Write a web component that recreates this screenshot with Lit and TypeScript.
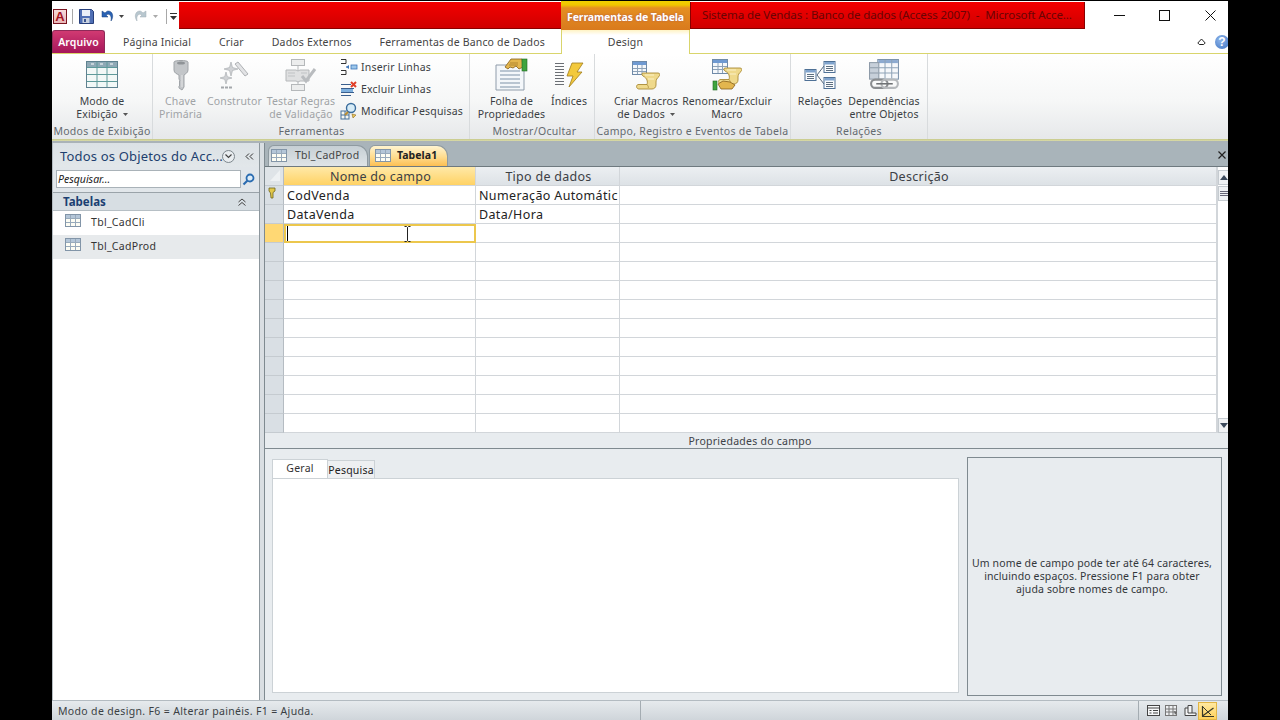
import { LitElement, html, svg, css } from "lit";
import { customElement } from "lit/decorators.js";

const tableIco = (w = 16, h = 13) => html`<svg width=${w} height=${h} viewBox="0 0 16 13"><rect x=".5" y=".5" width="15" height="12" fill="#fdfdf4" stroke="#8295a8"/><rect x="1" y="1" width="14" height="3" fill="#b4c6d8"/><path d="M1 4.500h14M1 8.500h14M5.500 1v11M10.500 1v11" stroke="#98aabb" fill="none"/></svg>`;

const bigTable = html`<svg width="32" height="27" viewBox="0 0 32 27"><rect x=".5" y=".5" width="31" height="26" fill="#f2f8f7" stroke="#5f8290"/><rect x="1" y="1" width="30" height="5" fill="#8fa9b6"/><path d="M5 3h3M14 3h3M24 3h3" stroke="#fff"/><path d="M1 6.500h30M1 13.500h30M1 20.500h30M11 1v25M21 1v25" stroke="#5e9a9a" fill="none"/></svg>`;

const keyIco = html`<svg width="18" height="32" viewBox="0 0 18 32"><path d="M2 3c0-2 14-2 14 0v8c0 3-3 4-4 5v12l-2 3-3-2v-2l1-1-1-1 1-1-1-1 1-1-1-2v-4c-2-1-5-2-5-5z" fill="#c3c6c9" stroke="#a0a4a8"/><ellipse cx="9" cy="4" rx="4" ry="1.600" fill="#8f9397"/><path d="M10 16v12" stroke="#e4e5e6"/></svg>`;

const wandIco = html`<svg width="29" height="28" viewBox="0 0 29 28"><path d="M15 3l3-2 10 12-3 2z" fill="#e2e3e5" stroke="#aeb1b4"/><path d="M11 1l1.500 5.500L18 8l-5.500 1.500L11 15 9.500 9.500 4 8l5.500-1.500z" fill="#d0d2d5" stroke="#a3a7ab" stroke-width=".6"/><path d="M6 11l1.300 4.700L12 17l-4.700 1.300L6 23l-1.300-4.700L0 17l4.700-1.300z" fill="#d0d2d5" stroke="#a3a7ab" stroke-width=".6"/><path d="M1 26.500h3M5 26.500h3M9 26.500h3" stroke="#a3a7ab" stroke-width="2"/></svg>`;

const testIco = html`<svg width="32" height="32" viewBox="0 0 32 32"><rect x="6.500" y=".5" width="13" height="6" fill="#eceded" stroke="#b5b8ba"/><rect x="6.500" y="25.500" width="13" height="6" fill="#eceded" stroke="#b5b8ba"/><path d="M13 7v18" stroke="#b5b8ba"/><path d="M1 11h10l2 1 2-1h9v11h-9l-2 1-2-1H1z" fill="#dfe0e1" stroke="#b5b8ba"/><path d="M3 14h7M3 17h7M16 14h6" stroke="#c0c3c5"/><path d="M17 17l4 5 9-12" fill="none" stroke="#b9bcbf" stroke-width="3"/></svg>`;

const insIco = html`<svg width="18" height="18" viewBox="0 0 18 18"><path d="M1 1.500h5v4H1M1 12.500h5v4H1" fill="none" stroke="#333"/><path d="M6 9h4" stroke="#4a7fc0" stroke-dasharray="1 1"/><path d="M9 7l-3 2 3 2z" fill="#3d75b8"/><rect x="11" y="7" width="6" height="4" fill="#9cc6ea" stroke="#3d75b8" stroke-width=".8"/></svg>`;

const delIco = html`<svg width="18" height="18" viewBox="0 0 18 18"><path d="M1 4.500h10M1 8.500h13M1 12.500h13M1 15.500h10" stroke="#3a5f8e"/><path d="M1 9h12v3H1z" fill="#7fb0de"/><path d="M11 2l5 5M16 2l-5 5" stroke="#e0402a" stroke-width="2"/></svg>`;

const lookIco = html`<svg width="18" height="18" viewBox="0 0 18 18"><rect x="1" y="9" width="8" height="8" fill="#f7f7f0" stroke="#44709c"/><path d="M1 13h8M5 9v8" stroke="#44709c"/><circle cx="11" cy="6" r="4.500" fill="#d7ecf7" stroke="#3a6c9c" stroke-width="1.400"/><path d="M8 10l-3 3" stroke="#b98c30" stroke-width="2"/><path d="M12 12l4 1-3 3z" fill="#e9c65a" stroke="#8f6d22" stroke-width=".6"/></svg>`;

const sheetIco = html`<svg width="34" height="33" viewBox="0 0 34 33"><path d="M1 7h28v25H1z" fill="#f4f7fa" stroke="#8f9caa"/><path d="M5 13h20M5 17h20M5 21h20M5 25h20M5 29h20" stroke="#7f93a8"/><path d="M10 9l6-8h11l1 8-4 2-3-3-3 2-3-1-2 2z" fill="#e3b64e" stroke="#86601c" stroke-width=".8"/><path d="M15 5l8 0M14 7l9 0" stroke="#9b7426" stroke-width=".7"/><rect x="27" y="1" width="5" height="12" fill="#3fa43f" stroke="#1f6a1f" stroke-width=".6"/></svg>`;

const indexIco = html`<svg width="30" height="26" viewBox="0 0 30 26"><path d="M1 1.500h9M1 4.500h9M1 7.500h9M1 10.500h9M1 13.500h9M1 16.500h9M1 19.500h9M1 22.500h9" stroke="#6b6f74" stroke-width="1.200"/><path d="M18 1h11l-6 9h5L15 25l4-11h-6z" fill="#f3c93c" stroke="#a07c1c" stroke-width=".8"/></svg>`;

const scroll = svg`<path d="M11 12h15c2 0 2.500 2 1 3.500-2 1.500-3 3.500-3 5.500v3c0 2.500-2 4-4 4H7c-2.500 0-3.500-3.500-1-4.500h9c1-3 0-6.500-4-8.500-1.500-1-1.500-3 0-3z" fill="#efd98b" stroke="#a98a36" stroke-width=".9"/><path d="M13 14h9M16 18h6" stroke="#fbf1c8"/><path d="M15 23.500c1 1.500 2 2.500 1 3.500" stroke="#a98a36" stroke-width=".8" fill="none"/>`;

const macroIco = html`<svg width="28" height="30" viewBox="0 0 28 30"><rect x=".5" y="1.500" width="14" height="13" fill="#f5f8fb" stroke="#6f8aa8"/><rect x="1" y="2" width="13" height="3" fill="#6f9ad2"/><path d="M1 8.500h13M1 11.500h13M5.500 5v9M10 5v9" stroke="#8da2b8"/><g transform="translate(0 1)">${scroll}</g></svg>`;

const renameIco = html`<svg width="30" height="32" viewBox="0 0 30 32"><rect x=".5" y=".5" width="15" height="14" fill="#f5f8fb" stroke="#6f8aa8"/><rect x="1" y="1" width="14" height="3" fill="#6f9ad2"/><path d="M1 7.500h14M1 10.500h14M6 4v10M10.500 4v10" stroke="#8da2b8"/><g transform="translate(2 -3)">${scroll}</g><path d="M6 25l5-3 7 1 5 3-3 4H9z" fill="#e3b64e" stroke="#86601c" stroke-width=".8"/><rect x="1" y="22" width="4" height="9" fill="#3fa43f" stroke="#1f6a1f" stroke-width=".6"/></svg>`;

const miniTbl = (x: number, y: number) => svg`<g transform="translate(${x} ${y})"><rect x=".5" y=".5" width="11" height="11" fill="#fbfcfd" stroke="#4f7196"/><rect x="1" y="1" width="10" height="2.500" fill="#7fa3cd"/><path d="M2.500 5.500h7M2.500 7.500h7M2.500 9.500h7" stroke="#5d6f80"/></g>`;

const relIco = html`<svg width="32" height="30" viewBox="0 0 32 30"><path d="M13 15l7-9M13 15l7 9" stroke="#56687c" fill="none"/>${miniTbl(0.5, 9)}${miniTbl(19.5, 1)}${miniTbl(19.5, 17)}</svg>`;

const depIco = html`<svg width="31" height="32" viewBox="0 0 30 31"><rect x="8.500" y=".5" width="20" height="19" fill="#f6f8fb" stroke="#7b92ac"/><rect x="9" y="1" width="19" height="3" fill="#8daad0"/><path d="M9 8.500h19M9 13.500h19M15.500 1v18M22 1v18" stroke="#8fa3b8"/><rect x=".5" y="3.500" width="9" height="16" fill="#c7d0da" stroke="#8d9aa8"/><path d="M1 8.500h8M1 13.500h8" stroke="#8d9aa8"/><rect x="2" y="20" width="16" height="8" rx="4" fill="none" stroke="#8a8d90" stroke-width="2"/><rect x="12" y="20" width="16" height="8" rx="4" fill="none" stroke="#b6b9bc" stroke-width="2"/><path d="M7 24h16" stroke="#6f7275" stroke-width="1.500"/></svg>`;

const drop = html`<svg class="drop" width="5" height="3" viewBox="0 0 5 3"><path d="M0 0h5L2.500 3z" fill="#555"/></svg>`;

const rows = [
  { name: "CodVenda", type: "Numeração Automátic", key: true },
  { name: "DataVenda", type: "Data/Hora" },
  { name: "", type: "", cur: true },
  ...Array.from({ length: 10 }, () => ({ name: "", type: "" })),
] as { name: string; type: string; key?: boolean; cur?: boolean }[];

@customElement("app-root")
export class AppRoot extends LitElement {
  static styles = css`
    :host { display: block; width: 1280px; height: 720px; background: #000; overflow: hidden; font-family: "Noto Sans", "Open Sans", sans-serif; font-size: 10.5px; color: #3b3f44; }
    svg { display: block; flex: none; }
    .app { margin: 1px 0 0 52px; width: 1176px; height: 719px; display: flex; flex-direction: column; background: #fff; overflow: hidden; }

    .title { height: 29px; display: flex; flex: none; background: #fff; }
    .qat { width: 127px; flex: none; display: flex; align-items: center; padding: 1px 0 0 1px; box-sizing: border-box; }
    .qat .sep { width: 1px; height: 15px; background: #a8a8a8; }
    .sepa { margin-right: 6px; }
    .sepb { margin-left: 8px; }
    .qi1 { margin-left: 6px; }
    .qi2 { margin-left: 5px; }
    .qi3 { margin-left: 10px; }
    .qi4 { margin-left: 3px; }
    .logo { width: 14px; height: 15px; box-sizing: border-box; border: 1px solid #7a1420; background: linear-gradient(#f6dada, #e9b7b7); color: #a3131f; font: 700 13px/13px "Liberation Sans", sans-serif; text-align: center; margin-right: 5px; }
    .red1 { width: 382px; flex: none; margin: 1px 0; background: linear-gradient(#f30000, #d00000); border-bottom: 1px solid #8a0000; box-sizing: border-box; }
    .ctx { width: 129px; flex: none; background: linear-gradient(#f0d000 0, #f0c400 4px, #e58f22 7px, #d97a1d 100%); color: #fff; font-weight: 700; font-size: 10.5px; letter-spacing: -.1px; display: flex; align-items: center; justify-content: center; padding-top: 3px; box-sizing: border-box; text-shadow: 0 0 2px #a55; }
    .red2 { width: 395px; flex: none; margin: 1px 0; background: linear-gradient(#f30000, #d00000); border: 1px solid #8a0000; border-top: 0; box-sizing: border-box; color: #6a0404; font-size: 11.5px; letter-spacing: -.08px; line-height: 25px; padding-left: 11px; white-space: pre; overflow: hidden; }
    .win { flex: 1; display: flex; align-items: center; padding-left: 29px; gap: 31px; }
    .w2 { margin-left: 3px; }
    .w3 { margin-left: 4px; }

    .tabs { height: 24px; display: flex; flex: none; border-bottom: 1px solid #d9d56c; box-sizing: border-box; letter-spacing: .17px; color: #444; }
    .tablist { width: 509px; flex: none; display: flex; align-items: center; }
    .arq { width: 53px; flex: none; align-self: stretch; background: linear-gradient(#d13a72, #a5165a); color: #fff; font-weight: 600; letter-spacing: .1px; border-radius: 3px 3px 0 0; display: flex; align-items: center; justify-content: center; margin-right: 4px; border: 1px solid #8e2a58; border-bottom: 0; box-sizing: border-box; }
    .tab { padding: 0 14px; white-space: nowrap; }
    .design { width: 129px; flex: none; box-sizing: border-box; background: linear-gradient(#fff3c4 0, #fff 5px); border: 1px solid #d9d56c; border-top: 0; border-bottom: 0; margin-bottom: -1px; text-align: center; line-height: 24px; }
    .tabend { flex: 1; display: flex; align-items: center; justify-content: flex-end; gap: 9px; }
    .help { width: 14px; height: 14px; border-radius: 50%; background: radial-gradient(circle at 40% 35%, #8fb5ea, #3f74c2); color: #fff; font: 700 12px/14px "Liberation Sans", sans-serif; text-align: center; margin-right: -1px; flex: none; }

    .ribbon { height: 85px; flex: none; display: flex; background: linear-gradient(#fff 0, #f6f7f7 55%, #e6e8ea 100%); }
    .grp { display: flex; flex-direction: column; box-sizing: border-box; border-right: 1px solid #d8dbdd; flex: none; }
    .gbody { flex: 1; display: flex; min-height: 0; }
    .gname { height: 15px; flex: none; line-height: 15px; text-align: center; color: #646a70; letter-spacing: .3px; white-space: nowrap; }
    .btn { display: flex; flex-direction: column; align-items: center; flex: none; box-sizing: border-box; padding-top: 4px; }
    .ic { height: 33px; display: flex; align-items: center; justify-content: center; margin-bottom: 4px; }
    .lbl { text-align: center; line-height: 13px; letter-spacing: .13px; color: #3b3f44; white-space: nowrap; }
    .dis .lbl { color: #a0a3a6; }
    .drop { display: inline-block; margin: 0 0 2px 2px; }
    .small { display: flex; flex-direction: column; padding-top: 2px; flex: none; }
    .srow { height: 22px; display: flex; align-items: center; gap: 3px; letter-spacing: .2px; white-space: nowrap; color: #3b3f44; }
    .g1 { width: 101px; }
    .g2 { width: 317px; padding-left: 1px; }
    .g3 { width: 125px; padding-left: 5px; }
    .g4 { width: 196px; }
    .g4 .gbody { padding-left: 15px; }
    .g5 { width: 137px; }
    .g5 .gbody { padding-left: 3px; }

    .rule { height: 4px; flex: none; background: linear-gradient(#c6c98a 0, #d9dbab 50%, #aab3b8 50%); }

    .body { flex: 1; display: flex; min-height: 0; }
    .nav { width: 208px; flex: none; display: flex; flex-direction: column; background: #fff; border-left: 1px solid #b5bdc2; border-right: 1px solid #8d979d; box-sizing: border-box; }
    .navhead { height: 24px; flex: none; display: flex; align-items: center; background: linear-gradient(#dbe1e5, #e2e7ea); padding: 2px 0 0 7px; box-sizing: border-box; color: #1e3f6e; font-size: 13px; letter-spacing: .17px; white-space: nowrap; }
    .navhead .t { width: 162px; flex: none; }
    .circ { width: 11px; height: 11px; border: 1px solid #7d868c; border-radius: 50%; background: #e9edf0; display: flex; align-items: center; justify-content: center; margin-right: 10px; }
    .search { height: 26px; flex: none; background: #e1e6ea; padding: 3px 2px 0 3px; box-sizing: border-box; display: flex; border-bottom: 1px solid #9aa3a9; }
    .sbox { width: 185px; height: 18px; box-sizing: border-box; background: #fff; border: 1px solid #a9b2b8; font: italic 10.5px/16px "Noto Sans", sans-serif; color: #222; padding-left: 1px; }
    .sbtn { flex: 1; display: flex; align-items: center; justify-content: center; height: 18px; padding-right: 2px; }
    .cat { height: 18px; flex: none; background: #d7dee3; border-bottom: 1px solid #b6bfc5; color: #1b3f72; font-weight: 700; font-size: 11.5px; display: flex; align-items: center; justify-content: space-between; padding: 0 13px 0 10px; box-sizing: border-box; }
    .item { height: 24px; flex: none; display: flex; align-items: center; padding-left: 12px; gap: 10px; letter-spacing: .3px; color: #333; padding-bottom: 3px; box-sizing: border-box; }
    .item svg { margin-bottom: 3px; }
    .item.sel { background: #e7eaec; }

    .split { width: 5px; flex: none; background: #d9dee2; border-right: 1px solid #7f8a90; box-sizing: border-box; }
    .main { flex: 1; min-width: 0; display: flex; flex-direction: column; position: relative; background: #e8ecef; }
    .dtabs { height: 24px; flex: none; display: flex; align-items: flex-end; background: #a9b4ba; border-bottom: 1px solid #6e797f; box-sizing: border-box; padding: 0 2px 0 3px; gap: 1px; }
    .dt { height: 21px; display: flex; align-items: center; box-sizing: border-box; border: 1px solid #8f9aa0; border-bottom: 0; border-radius: 6px 11px 0 0; letter-spacing: .22px; padding-bottom: 2px; }
    .dt.a { width: 100px; background: linear-gradient(#c6cfd4, #dfe4e7); color: #444; padding-left: 2px; gap: 8px; }
    .dt.b { width: 79px; background: linear-gradient(#fff4d0, #ffdc8e 55%, #fdbf52); font-weight: 700; color: #222; letter-spacing: .05px; padding-left: 5px; gap: 6px; }
    .x { margin: auto 0 auto auto; }

    .grid { height: 266px; flex: none; display: flex; background: #fff; }
    .gcols { width: 952px; flex: none; }
    .gr { display: grid; grid-template-columns: 19px 192px 144px 597px; height: 19px; box-sizing: border-box; }
    .gr > div { box-sizing: border-box; border-right: 1px solid #d2d6da; border-bottom: 1px solid #d2d6da; font-size: 12.5px; line-height: 20px; padding-left: 3px; color: #222; white-space: nowrap; overflow: hidden; letter-spacing: .36px; }
    .gr > .sl { background: #d9dfe4; padding: 1px 0 0 3px; border-right: 1px solid #b5bcc2; border-bottom: 1px solid #c5cbd0; display: flex; align-items: flex-start; }
    .gr > .sl.c { background: #ffd874; }
    .gh > div { background: linear-gradient(#eceff2, #dde2e6); text-align: center; color: #3c4045; padding: 0 0 0 2px; letter-spacing: .28px; }
    .gh > .on { background: linear-gradient(#ffe9a8, #ffd264); }
    .gh > .sl { background: #dfe4e8; padding: 0; }
    .gr > .cur { border: 2px solid #ecc74d; padding-left: 1px; line-height: 15px; }
    .caret { width: 1px; height: 15px; background: #000; }
    .ibeam { position: absolute; left: 139px; top: 83px; }
    .sb { flex: 1; display: flex; flex-direction: column; background: #fff; border-left: 1px solid #d2d6da; align-items: stretch; }
    .sbt { height: 3px; flex: none; }
    .sbb { height: 15px; flex: none; background: #f0f2f4; border: 1px solid #c5cbd0; border-right: 0; box-sizing: border-box; display: flex; align-items: center; justify-content: center; }
    .sbb.th { margin-top: 1px; }
    .sbsp { flex: 1; }

    .phead { height: 15px; flex: none; background: #e8ecef; border-bottom: 1px solid #7f8a90; text-align: center; line-height: 17px; color: #3d4247; letter-spacing: .25px; padding-left: 7px; white-space: nowrap; }
    .lower { flex: 1; min-height: 0; display: flex; padding: 8px 6px 4px 7px; gap: 8px; box-sizing: border-box; }
    .pleft { width: 687px; flex: none; display: flex; flex-direction: column; padding-top: 2px; }
    .ptabs { height: 19px; flex: none; display: flex; align-items: flex-end; }
    .pt1 { width: 56px; height: 20px; background: #fff; border: 1px solid #ccd2d6; border-bottom: 0; box-sizing: border-box; text-align: center; line-height: 16px; color: #333; margin-bottom: -1px; letter-spacing: .2px; }
    .pt2 { width: 47px; height: 18px; background: #eef0f2; border: 1px solid #ccd2d6; border-bottom: 0; border-left: 0; box-sizing: border-box; text-align: center; line-height: 18px; color: #222; letter-spacing: .2px; }
    .panel { height: 215px; flex: none; background: #fff; border: 1px solid #ccd2d6; box-sizing: border-box; }
    .hbox { flex: 1; height: 239px; border: 1px solid #7f8a90; box-sizing: border-box; background: #e8ecef; display: flex; align-items: center; justify-content: center; text-align: center; line-height: 13px; letter-spacing: .13px; color: #33373b; white-space: nowrap; padding-right: 5px; }

    .status { height: 20px; flex: none; display: flex; background: linear-gradient(#e6eaed, #cfd5da); border-top: 1px solid #b3bbc1; box-sizing: border-box; color: #3a3f44; letter-spacing: .34px; }
    .st { width: 588px; flex: none; line-height: 21px; padding-left: 6px; box-sizing: border-box; white-space: nowrap; }
    .ssep { width: 1px; flex: none; background: #a4acb2; }
    .ssp { width: 497px; flex: none; }
    .vws { display: flex; align-items: center; padding-left: 8px; gap: 5px; }
    .v3 { margin-left: 1px; }
    .act { width: 19px; height: 18px; background: linear-gradient(#ffe9a0, #ffd15a); border: 1px solid #e2b544; box-sizing: border-box; display: flex; align-items: center; justify-content: center; margin-left: -4px; margin-top: 1px; }
  `;

  private btn(icon: unknown, lines: unknown, w: number, dis = false) {
    return html`<div class="btn ${dis ? "dis" : ""}" style="width:${w}px"><div class="ic">${icon}</div><div class="lbl">${lines}</div></div>`;
  }

  render() {
    return html`<div class="app">
      <div class="title">
        <div class="qat">
          <div class="logo">A</div>
          <div class="sep sepa"></div>
          <svg width="15" height="15" viewBox="0 0 15 15"><path d="M.5.5h12l2 2v12H.500z" fill="#4f6fb5" stroke="#28407c"/><rect x="3" y="1" width="8" height="6" fill="#e9eef8"/><rect x="3.500" y="9" width="7" height="5" fill="#c9d2e0"/><rect x="5" y="10" width="2" height="3" fill="#3b5590"/></svg>
          <svg class="qi1" width="14" height="14" viewBox="0 0 14 14"><path d="M2 2v6h6L6 6c3-2 6 0 5 6 3-4 2-10-3-10-1 0-2 1-3 2z" fill="#2a62b4" stroke="#18407c" stroke-width=".5"/></svg>
          <svg class="qi2" width="5" height="3" viewBox="0 0 5 3"><path d="M0 0h5L2.500 3z" fill="#444"/></svg>
          <svg class="qi3" width="14" height="14" viewBox="0 0 14 14"><path d="M12 2v6H6l2-2C5 4 2 6 3 12 0 8 1 2 6 2c1 0 2 1 3 2z" fill="#b8c7cf" stroke="#a0adb4" stroke-width=".5"/></svg>
          <svg class="qi2" width="5" height="3" viewBox="0 0 5 3"><path d="M0 0h5L2.500 3z" fill="#aaa"/></svg>
          <div class="sep sepb"></div>
          <svg class="qi4" width="7" height="7" viewBox="0 0 7 7"><path d="M0 .5h7" stroke="#333"/><path d="M0 3h7L3.500 7z" fill="#333"/></svg>
        </div>
        <div class="red1"></div>
        <div class="ctx">Ferramentas de Tabela</div>
        <div class="red2">Sistema de Vendas : Banco de dados (Access 2007)  -  Microsoft Acce...</div>
        <div class="win">
          <svg width="11" height="11" viewBox="0 0 11 11"><path d="M0 5.500h11" stroke="#111"/></svg>
          <svg class="w2" width="11" height="11" viewBox="0 0 11 11"><rect x=".5" y=".5" width="10" height="10" fill="none" stroke="#111"/></svg>
          <svg class="w3" width="11" height="11" viewBox="0 0 11 11"><path d="M.5.5l10 10M10.500.5l-10 10" stroke="#111"/></svg>
        </div>
      </div>

      <div class="tabs">
        <div class="tablist">
          <div class="arq">Arquivo</div>
          <div class="tab">Página Inicial</div>
          <div class="tab">Criar</div>
          <div class="tab">Dados Externos</div>
          <div class="tab">Ferramentas de Banco de Dados</div>
        </div>
        <div class="design">Design</div>
        <div class="tabend">
          <svg width="9" height="7" viewBox="0 0 9 7"><path d="M.8 5l3.700-4 3.700 4-1.500 1.500h-4.400z" fill="none" stroke="#222"/></svg>
          <div class="help">?</div>
        </div>
      </div>

      <div class="ribbon">
        <div class="grp g1">
          <div class="gbody">${this.btn(bigTable, html`Modo de<br>Exibição ${drop}`, 100)}</div>
          <div class="gname">Modos de Exibição</div>
        </div>
        <div class="grp g2">
          <div class="gbody">
            ${this.btn(keyIco, html`Chave<br>Primária`, 53, true)}
            ${this.btn(wandIco, html`Construtor`, 55, true)}
            ${this.btn(testIco, html`Testar Regras<br>de Validação`, 78, true)}
            <div class="small">
              <div class="srow">${insIco}Inserir Linhas</div>
              <div class="srow">${delIco}Excluir Linhas</div>
              <div class="srow">${lookIco}Modificar Pesquisas</div>
            </div>
          </div>
          <div class="gname">Ferramentas</div>
        </div>
        <div class="grp g3">
          <div class="gbody">
            ${this.btn(sheetIco, html`Folha de<br>Propriedades`, 73)}
            ${this.btn(indexIco, html`Índices`, 42)}
          </div>
          <div class="gname">Mostrar/Ocultar</div>
        </div>
        <div class="grp g4">
          <div class="gbody">
            ${this.btn(macroIco, html`Criar Macros<br>de Dados ${drop}`, 72)}
            ${this.btn(renameIco, html`Renomear/Excluir<br>Macro`, 90)}
          </div>
          <div class="gname">Campo, Registro e Eventos de Tabela</div>
        </div>
        <div class="grp g5">
          <div class="gbody">
            ${this.btn(relIco, html`Relações`, 52)}
            ${this.btn(depIco, html`Dependências<br>entre Objetos`, 76)}
          </div>
          <div class="gname">Relações</div>
        </div>
      </div>
      <div class="rule"></div>

      <div class="body">
        <div class="nav">
          <div class="navhead">
            <span class="t">Todos os Objetos do Acc...</span>
            <div class="circ"><svg width="7" height="5" viewBox="0 0 7 5"><path d="M.5.500l3 3 3-3" fill="none" stroke="#444" stroke-width="1.200"/></svg></div>
            <svg width="9" height="7" viewBox="0 0 9 7"><path d="M4 .5L1 3.500l3 3M8 .5L5 3.500l3 3" fill="none" stroke="#333"/></svg>
          </div>
          <div class="search">
            <div class="sbox">Pesquisar...</div>
            <div class="sbtn"><svg width="13" height="13" viewBox="0 0 13 13"><circle cx="8" cy="5" r="3.500" fill="#dcecf8" stroke="#2b6cb0" stroke-width="1.800"/><path d="M5.500 7.500L1.500 11.500" stroke="#2b6cb0" stroke-width="2.200"/></svg></div>
          </div>
          <div class="cat">Tabelas<svg width="8" height="8" viewBox="0 0 8 8"><path d="M.5 4l3.500-3 3.500 3M.5 7.500l3.500-3 3.500 3" fill="none" stroke="#444"/></svg></div>
          <div class="item">${tableIco()}Tbl_CadCli</div>
          <div class="item sel">${tableIco()}Tbl_CadProd</div>
        </div>
        <div class="split"></div>
        <div class="main">
          <div class="dtabs">
            <div class="dt a">${tableIco()}Tbl_CadProd</div>
            <div class="dt b">${tableIco()}Tabela1</div>
            <svg class="x" width="8" height="8" viewBox="0 0 8 8"><path d="M.5.5l7 7M7.500.5l-7 7" stroke="#222" stroke-width="1.200"/></svg>
          </div>
          <div class="grid">
            <div class="gcols">
              <div class="gr gh"><div class="sl"><svg width="18" height="18" viewBox="0 0 18 18"><path d="M15 3L5 14h10z" fill="#eef1f3"/></svg></div><div class="on">Nome do campo</div><div>Tipo de dados</div><div>Descrição</div></div>
              ${rows.map((r) => html`<div class="gr">
                <div class="sl ${r.cur ? "c" : ""}">${r.key ? html`<svg width="8" height="12" viewBox="0 0 8 12"><path d="M1 1h6v3L5 5.500V11H3L2.500 6 1 4z" fill="#e2c84a" stroke="#6f6420" stroke-width=".8"/></svg>` : ""}</div>
                <div class=${r.cur ? "cur" : ""}>${r.cur ? html`<div class="caret"></div>` : r.name}</div>
                <div>${r.type}</div>
                <div></div>
              </div>`)}
            </div>
            <div class="sb">
              <div class="sbt"></div>
              <div class="sbb"><svg width="8" height="5" viewBox="0 0 8 5"><path d="M0 5h8L4 0z" fill="#3c4a5c"/></svg></div>
              <div class="sbb th"><svg width="8" height="6" viewBox="0 0 8 6"><path d="M0 .5h8M0 2.500h8M0 4.500h8" stroke="#667"/></svg></div>
              <div class="sbsp"></div>
              <div class="sbb"><svg width="8" height="5" viewBox="0 0 8 5"><path d="M0 0h8L4 5z" fill="#3c4a5c"/></svg></div>
            </div>
          </div>
          <div class="phead">Propriedades do campo</div>
          <div class="lower">
            <div class="pleft">
              <div class="ptabs"><div class="pt1">Geral</div><div class="pt2">Pesquisa</div></div>
              <div class="panel"></div>
            </div>
            <div class="hbox">Um nome de campo pode ter até 64 caracteres,<br>incluindo espaços. Pressione F1 para obter<br>ajuda sobre nomes de campo.</div>
          </div>
          <svg class="ibeam" width="7" height="16" viewBox="0 0 7 16"><path d="M.5.500h2l1 1 1-1h2M3.500 1.500v13M.5 15.500h2l1-1 1 1h2" fill="none" stroke="#222"/></svg>
        </div>
      </div>

      <div class="status">
        <div class="st">Modo de design. F6 = Alterar painéis. F1 = Ajuda.</div>
        <div class="ssep"></div>
        <div class="ssp"></div>
        <div class="ssep"></div>
        <div class="vws">
          <svg width="13" height="11" viewBox="0 0 13 11"><rect x=".5" y=".5" width="12" height="10" fill="#f6f7f8" stroke="#444"/><path d="M.5 3h12M2.500 5.500h2M2.500 8h2M6 5.500h5M6 8h5" stroke="#444"/></svg>
          <svg width="13" height="11" viewBox="0 0 13 11"><rect x=".5" y=".5" width="11" height="10" fill="#eef0f2" stroke="#777"/><path d="M4 .5v10M8 .5v10M.5 4h11M.5 7h11" stroke="#777"/><path d="M9 6l3 1-2 3z" fill="#666"/></svg>
          <svg class="v3" width="13" height="11" viewBox="0 0 13 11"><path d="M1 10.500V3h3V.5h4V8h4v2.500z" fill="#f3f4f5" stroke="#444"/><path d="M4 3v5h4" fill="none" stroke="#444"/></svg>
          <div class="act"><svg width="14" height="12" viewBox="0 0 14 12"><path d="M1 11.500h12M1.500 11.500V1M1.500 11l11-8" stroke="#3a3a28" stroke-width="1.200" fill="none"/><path d="M2 2l8 8" stroke="#3a3a28"/></svg></div>
        </div>
      </div>
    </div>`;
  }
}
